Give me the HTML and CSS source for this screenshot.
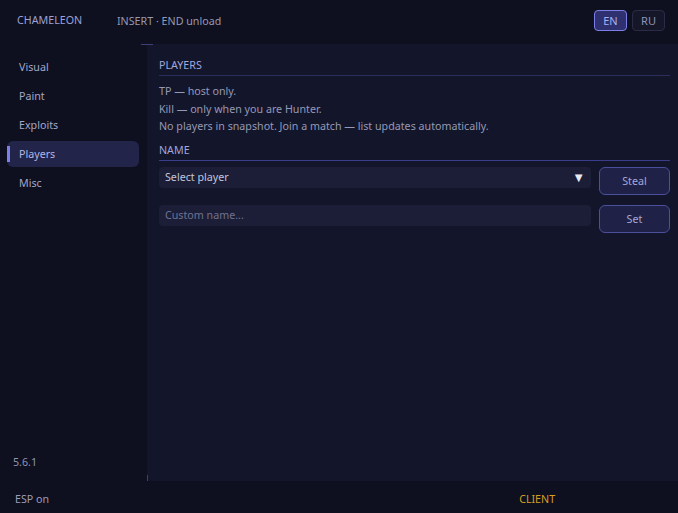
FILE: index.html
```html
<!DOCTYPE html>
<html lang="en">
<head>
    <meta charset="UTF-8">
    <meta name="viewport" content="width=device-width, initial-scale=1.0">
    <title>Chameleon</title>
    <link rel="stylesheet" href="styles.css">
</head>
<body>
    <div class="app">
        <header class="topbar">
            <span class="brand">CHAMELEON</span>
            <span class="hint">INSERT · END unload</span>
            <div class="lang">
                <button class="lang-btn active">EN</button>
                <button class="lang-btn">RU</button>
            </div>
        </header>

        <nav class="sidebar">
            <ul class="menu">
                <li>Visual</li>
                <li>Paint</li>
                <li>Exploits</li>
                <li class="active">Players</li>
                <li>Misc</li>
            </ul>
            <div class="version">5.6.1</div>
        </nav>

        <main class="content">
            <h2 class="section">PLAYERS</h2>
            <div class="notes">
                <p class="note">TP — host only.</p>
                <p class="note">Kill — only when you are Hunter.</p>
                <p class="note">No players in snapshot. Join a match — list updates automatically.</p>
            </div>

            <h2 class="section accent">NAME</h2>
            <div class="row">
                <div class="select">
                    <span>Select player</span>
                    <span class="arrow">▼</span>
                </div>
                <button class="action">Steal</button>
            </div>
            <div class="row">
                <input class="field" type="text" placeholder="Custom name...">
                <button class="action">Set</button>
            </div>
        </main>

        <footer class="statusbar">
            <span class="esp">ESP on</span>
            <span class="mode">CLIENT</span>
        </footer>
    </div>
</body>
</html>
```

FILE: styles.css
```css
* {
    box-sizing: border-box;
}
body {
    margin: 0;
    background-color: #0e0f1f;
    font-family: 'Noto Sans', 'Open Sans', sans-serif;
    font-size: 10.7px;
    color: #9a9db8;
}
.app {
    width: 678px;
    height: 513px;
    display: grid;
    grid-template-columns: 147px 1fr;
    grid-template-rows: 44px 1fr 32px;
}
.topbar {
    grid-column: 1 / 3;
    display: flex;
    align-items: center;
    padding: 0 13px 0 17px;
    background-color: #0e0f1f;
}
.brand {
    color: #9aa2d8;
    width: 100px;
    margin-top: -4px;
}
.hint {
    color: #9599b3;
    margin-top: -2px;
}
.lang {
    margin-left: auto;
    display: flex;
    gap: 5px;
    margin-top: -3px;
}
.lang-btn {
    width: 33px;
    height: 21px;
    padding: 0;
    font-family: inherit;
    font-size: 11px;
    color: #8e93b8;
    background-color: #151729;
    border: 1px solid #2a2c47;
    border-radius: 4px;
}
.lang-btn.active {
    color: #a9aef0;
    background-color: #2e3070;
    border-color: #7b80e6;
}
.sidebar {
    display: flex;
    flex-direction: column;
    padding: 10px 8px 12px 7px;
    background-color: #0e0f1f;
}
.menu {
    list-style: none;
    margin: 0;
    padding: 0;
    display: flex;
    flex-direction: column;
    gap: 3px;
}
.menu li {
    position: relative;
    height: 26px;
    line-height: 26px;
    padding-left: 12px;
    border-radius: 6px;
    color: #a3a7c6;
}
.menu li.active {
    background-color: #222449;
    color: #b2b6e6;
}
.menu li.active::before {
    content: '';
    position: absolute;
    left: 0;
    top: 5px;
    width: 3px;
    height: 16px;
    background-color: #7b80e6;
}
.version {
    margin-top: auto;
    padding-left: 6px;
    color: #8f93b3;
}
.content {
    position: relative;
    padding: 14px 8px 0 12px;
    background-color: #13152a;
}
/* corner ticks where the panels meet */
.content::before {
    content: '';
    position: absolute;
    left: -6px;
    top: 0;
    width: 12px;
    height: 1px;
    background-color: #3d3f7a;
}
.content::after {
    content: '';
    position: absolute;
    left: 0;
    bottom: 0;
    width: 1px;
    height: 6px;
    background-color: #3d3f7a;
}
.section {
    margin: 0;
    padding-bottom: 3px;
    font-size: 10.7px;
    font-weight: normal;
    color: #a1a6de;
    border-bottom: 1px solid #2c2e5a;
}
.section.accent {
    margin-top: 7px;
    margin-bottom: 6px;
    border-bottom-color: #3a3d8c;
}
.notes {
    margin-top: 7px;
}
.note {
    margin: 0;
    line-height: 17.5px;
    color: #9599b5;
}
.row {
    display: flex;
    gap: 8px;
    margin-bottom: 10px;
}
.select,
.field {
    flex: 1;
    height: 21px;
    background-color: #1c1e37;
    border: none;
    border-radius: 4px;
    font-family: inherit;
    font-size: 10.7px;
}
.select {
    display: flex;
    align-items: center;
    justify-content: space-between;
    padding: 0 6px;
    color: #c2c5dc;
}
.arrow {
    color: #e8e9f5;
    font-size: 13px;
}
.field {
    padding: 0 6px;
    color: #c2c5dc;
}
.field::placeholder {
    color: #6e7290;
}
.action {
    width: 71px;
    height: 28px;
    padding: 0;
    font-family: inherit;
    font-size: 10.7px;
    color: #a4a8d8;
    background-color: #1f2146;
    border: 1px solid #4b4f9c;
    border-radius: 6px;
}
.statusbar {
    grid-column: 1 / 3;
    display: flex;
    align-items: center;
    padding: 3px 15px 0;
    background-color: #0e0f1f;
    color: #9a9db8;
}
.mode {
    margin-left: 470px;
    color: #d4a021;
}
```
